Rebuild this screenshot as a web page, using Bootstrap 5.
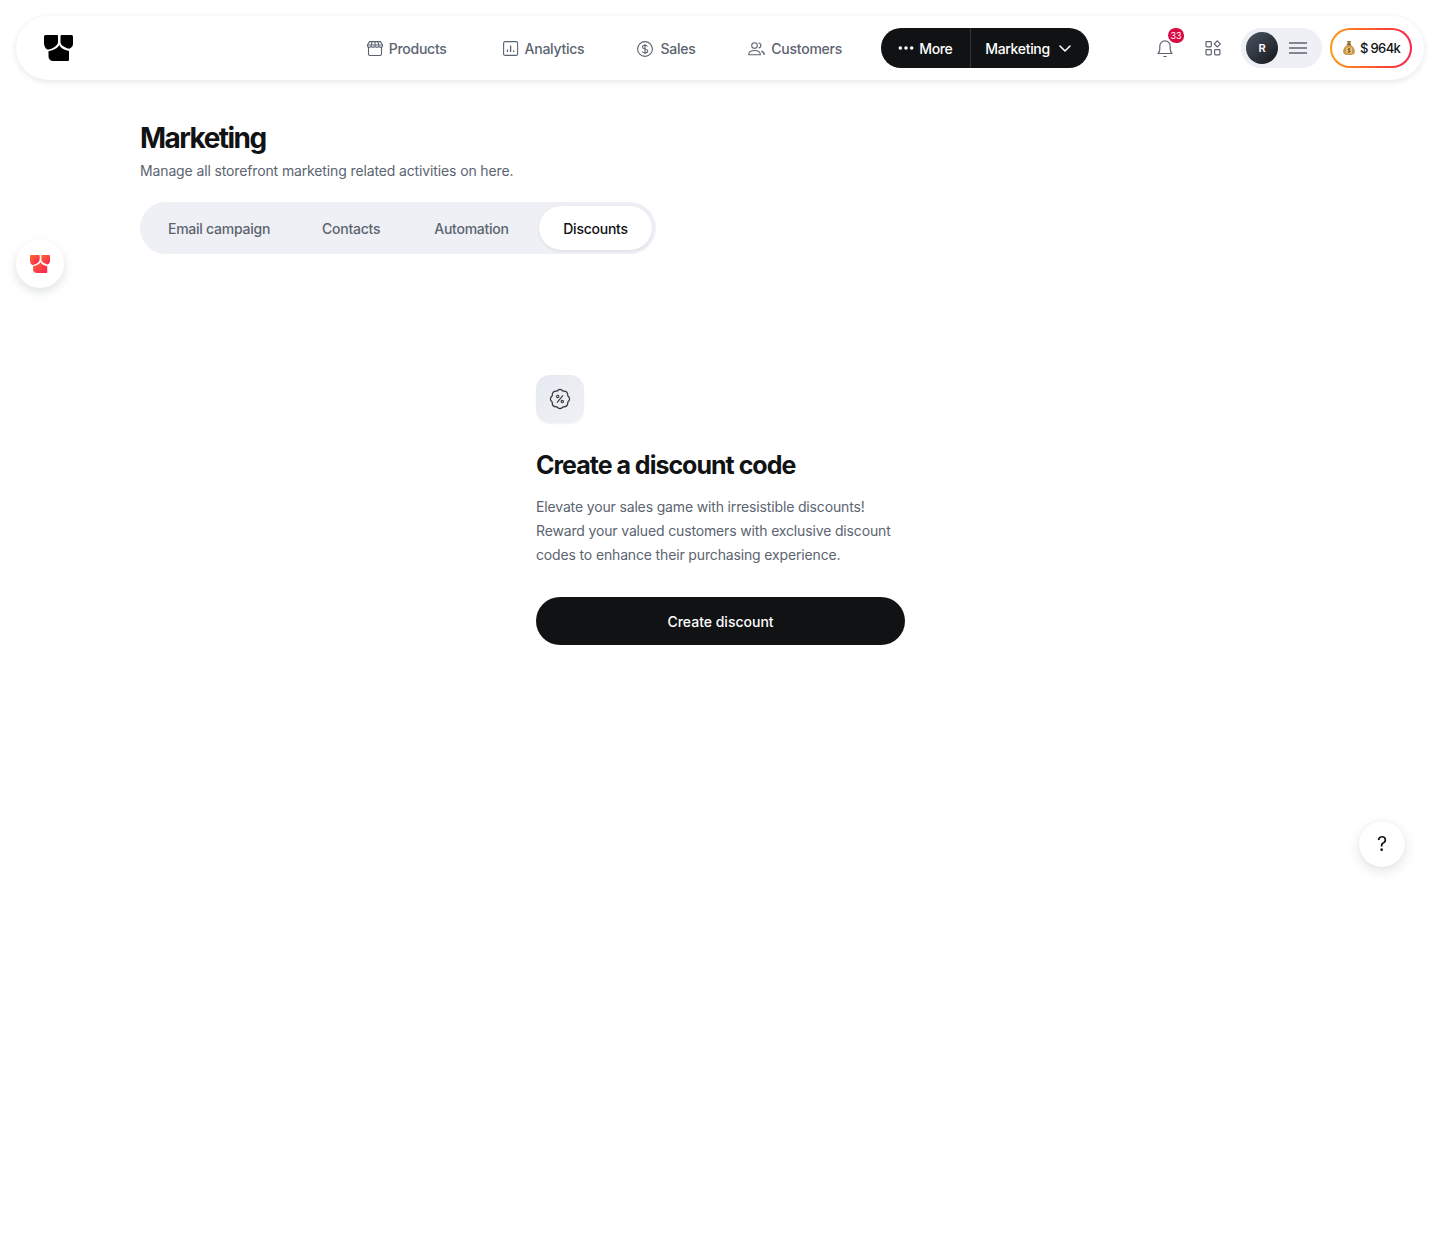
<!DOCTYPE html>
<html lang="en">
<head>
  <meta charset="UTF-8" />
  <meta name="viewport" content="width=device-width, initial-scale=1.0"/>
  <title>Marketing</title>
  <link href="https://cdn.jsdelivr.net/npm/bootstrap@5.3.0/dist/css/bootstrap.min.css" rel="stylesheet">
  <style>
    body { font-family: Inter, "Liberation Sans", sans-serif; color: #111214; background: #fff; min-height: 1244px; letter-spacing: -0.02em; }
    svg { display: block; flex: none; }
    .top-shell { padding: 16px 16px 0; }
    .top-bar { height: 64px; border-radius: 32px; background: #fff; box-shadow: 0 2px 6px rgba(30,40,60,.10), 0 0 2px rgba(30,40,60,.04); padding: 0 12px 0 28px; }
    .brand-gap { width: 294px; }
    .menu-link { color: #5b6470; font-size: 14px; font-weight: 500; text-decoration: none; gap: 6px; margin-top: 1px; letter-spacing: -0.018em; }
    .menu-link.m-products { width: 136px; }
    .menu-link.m-analytics { width: 135px; }
    .menu-link.m-sales { width: 111px; }
    .menu-link.m-sales svg { margin-right: 1px; }
    .menu-link.m-customers { width: 133px; }
    .dark-switch { height: 40px; width: 208px; border-radius: 20px; background: #111214; color: #fff; font-size: 14px; font-weight: 500; }
    .dark-switch > div { height: 40px; }
    .sw-more { width: 90px; padding-left: 17px; gap: 5px; border-right: 1px solid #33353a; }
    .sw-market { padding-left: 14px; gap: 9px; }
    .tool-area { margin-left: 68px; }
    .bell-wrap { width: 16px; height: 20px; margin-right: 32px; position: relative; }
    .bell-badge { position: absolute; left: 11px; top: -10px; width: 16px; height: 15px; border-radius: 50% 50% 45% 55%; background: #d90b43; color: #fff; font-size: 9px; line-height: 15px; text-align: center; letter-spacing: 0; }
    .user-pill { width: 81px; height: 40px; border-radius: 20px; background: #eef0f5; margin-left: 20px; padding-left: 5px; gap: 11px; }
    .user-face { width: 32px; height: 32px; border-radius: 50%; background: linear-gradient(135deg, #4b5563, #15171a); color: #fff; font-size: 11px; font-weight: 600; letter-spacing: 0; }
    .money-pill { width: 82px; height: 40px; margin-left: 8px; border-radius: 20px; border: 2px solid transparent; background: linear-gradient(#fff, #fff) padding-box, linear-gradient(90deg, #fb9b0e, #fb1f4d) border-box; font-size: 13px; font-weight: 500; gap: 5px; padding-left: 11px; color: #111214; letter-spacing: -0.05em; }
    .money-pill span { margin-top: 1px; }
    .page-body { padding: 42px 0 0 140px; }
    .page-title { font-size: 28px; line-height: 32px; font-weight: 700; letter-spacing: -0.055em; margin: 0 0 7px; color: #111214; }
    .page-sub { font-size: 14px; line-height: 20px; color: #5b6470; margin: 0 0 21px; letter-spacing: -0.13px; }
    .tab-strip { width: 516px; height: 52px; border-radius: 26px; background: #eef0f5; padding: 4px; }
    .tab-item { font-size: 14px; font-weight: 500; color: #5b6470; height: 44px; border-radius: 22px; text-decoration: none; letter-spacing: -0.018em; }
    .tab-item.t1 { margin-left: 24px; }
    .tab-item.t2 { margin-left: 52px; }
    .tab-item.t3 { margin-left: 54px; }
    .tab-item.t4 { margin-left: auto; width: 113px; background: #fff; color: #111214; box-shadow: 0 1px 3px rgba(30,40,60,.10); }
    .empty-box { width: 369px; margin: 121px 0 0 396px; }
    .empty-icon { width: 48px; height: 48px; border-radius: 14px; background: linear-gradient(135deg, #e6e9f0, #f0f1f6); box-shadow: 0 1px 2px rgba(30,40,60,.06); }
    .empty-title { font-size: 25px; line-height: 32px; font-weight: 700; letter-spacing: -0.04em; margin: 26px 0 14px; color: #111214; }
    .empty-text { font-size: 14px; line-height: 24px; color: #5b6470; margin: 0 0 30px; letter-spacing: -0.15px; }
    .create-btn { height: 48px; border-radius: 24px; background: #111214; color: #fff; border: 0; font-size: 14px; font-weight: 500; }
    .create-btn:hover { background: #111214; color: #fff; }
    .float-logo { position: fixed; left: 16px; top: 240px; width: 48px; height: 48px; border-radius: 50%; background: #fff; box-shadow: 0 4px 10px rgba(30,40,60,.14); }
    .float-help { position: fixed; left: 1359px; top: 821px; width: 46px; height: 46px; border-radius: 50%; background: #fff; box-shadow: 0 4px 12px rgba(30,40,60,.13), 0 0 2px rgba(30,40,60,.08); font-size: 20px; color: #111214; letter-spacing: 0; }
  </style>
</head>
<body>

  <div class="top-shell">
    <nav class="top-bar d-flex align-items-center">
      <svg class="brand-mark" width="29" height="26" viewBox="0 0 29 26" fill="#000">
        <path d="M1.500 0H13a1 1 0 0 1 1 1v6c0 3-3.500 6-9.500 7.600C2 14.500 0 11.500 0 8V1.500A1.500 1.500 0 0 1 1.500 0z"/>
        <path d="M17.500 0h10A1.500 1.500 0 0 1 29 1.500V9c0 2-1.500 4-4 4.800C20 12.500 16.500 10 16.500 7V1a1 1 0 0 1 1-1z"/>
        <path d="M15.300 10c1.200 3 4.500 5 9.700 6v9a1 1 0 0 1-1 1H9c-2.500 0-4.500-2-4.500-4.500v-5.200C10 15 14 13 15.300 10z"/>
      </svg>
      <div class="brand-gap"></div>
      <a href="#" class="menu-link m-products d-flex align-items-center">
        <svg width="16" height="15" viewBox="0 0 16 15" fill="none" stroke="#5b6470" stroke-width="1.100"><path d="M1.500 6v7a1.500 1.500 0 0 0 1.500 1.500h10a1.500 1.500 0 0 0 1.500-1.500V6"/><path d="M2.500.6h11l2 3.400v.5a1.800 1.800 0 0 1-3.700 0 1.900 1.900 0 0 1-3.800 0 1.900 1.900 0 0 1-3.800 0 1.800 1.800 0 0 1-3.700 0V4z"/><path d="M.6 4h14.800M5 .8 4.200 4.500M8 .8v3.700M11 .8l.8 3.700"/></svg>
        Products
      </a>
      <a href="#" class="menu-link m-analytics d-flex align-items-center">
        <svg width="16" height="15" viewBox="0 0 16 15" fill="none" stroke="#5b6470" stroke-width="1.100"><rect x=".6" y=".6" width="14" height="13.800" rx="1.500"/><path d="M4.500 11V8.500M7.600 11V4.500M10.700 11V9.500" stroke-width="1.300"/></svg>
        Analytics
      </a>
      <a href="#" class="menu-link m-sales d-flex align-items-center">
        <svg width="16" height="16" viewBox="0 0 16 16" fill="none" stroke="#5b6470" stroke-width="1.100"><circle cx="8" cy="8" r="7.400"/><path d="M10.500 5.600C10 4.600 9 4.200 8 4.200c-1.400 0-2.500.7-2.500 1.900 0 2.700 5.200 1.200 5.200 3.900 0 1.200-1.200 1.900-2.700 1.900-1.200 0-2.200-.5-2.700-1.500M8 3v10"/></svg>
        Sales
      </a>
      <a href="#" class="menu-link m-customers d-flex align-items-center">
        <svg width="17" height="14" viewBox="0 0 17 14" fill="none" stroke="#5b6470" stroke-width="1.100"><circle cx="6.500" cy="3.500" r="2.800"/><path d="M10.500 1c1.500.2 2.400 1.300 2.400 2.500s-.9 2.300-2.400 2.500"/><path d="M.7 12.800c0-2.800 2.500-4.300 5.800-4.300s5.800 1.500 5.800 4.300z"/><path d="M13.500 9.300c1.700.4 2.800 1.700 2.800 3.500" stroke-width="1.500"/></svg>
        Customers
      </a>
      <div class="dark-switch d-flex">
        <div class="sw-more d-flex align-items-center">
          <svg width="16" height="4" viewBox="0 0 16 4" fill="#fff"><circle cx="2.300" cy="2" r="1.800"/><circle cx="8" cy="2" r="1.800"/><circle cx="13.700" cy="2" r="1.800"/></svg>
          <span>More</span>
        </div>
        <div class="sw-market d-flex align-items-center">
          <span>Marketing</span>
          <svg width="12" height="7" viewBox="0 0 12 7" fill="none" stroke="#fff" stroke-width="1.500" stroke-linecap="round" stroke-linejoin="round"><path d="m1 1 5 5 5-5"/></svg>
        </div>
      </div>
      <div class="tool-area d-flex align-items-center">
        <div class="bell-wrap">
          <svg width="16" height="20" viewBox="0 0 16 20" fill="none" stroke="#5b6470" stroke-width="1.200" stroke-linejoin="round" stroke-linecap="round"><path d="M1 15.500c1.300-1.200 1.800-2.300 1.800-4.500V8a5.200 5.200 0 0 1 10.400 0v3c0 2.200.5 3.300 1.800 4.500z"/><path d="M6.800 18.500h2.400"/></svg>
          <span class="bell-badge">33</span>
        </div>
        <svg width="16" height="16" viewBox="0 0 16 16" fill="none" stroke="#5b6470" stroke-width="1.200"><rect x="1" y="1.600" width="5.300" height="5.300" rx=".8"/><rect x="1" y="9.600" width="5.300" height="5.300" rx=".8"/><rect x="9.600" y="9.600" width="5.300" height="5.300" rx=".8"/><path d="m12.300.9 3 3-3 3-3-3z"/></svg>
        <div class="user-pill d-flex align-items-center">
          <div class="user-face d-flex align-items-center justify-content-center">R</div>
          <svg width="18" height="12" viewBox="0 0 18 12" fill="none" stroke="#5b6470" stroke-width="1.300"><path d="M0 1h18M0 6h18M0 11h18"/></svg>
        </div>
        <div class="money-pill d-flex align-items-center">
          <svg width="12" height="14" viewBox="0 0 12 14"><path d="M4 0h4L7.300 3h-2.600z" fill="#a67a3a"/><path d="M4.300 3.400h3.400c2 1.600 4.300 4.200 4.300 7 0 2.500-2 3.600-6 3.600s-6-1.100-6-3.600c0-2.800 2.300-5.400 4.300-7z" fill="#c99a4e"/><rect x="4.200" y="2.800" width="3.600" height="1" fill="#5a3f19"/><rect x="3" y="6.500" width="6" height="6" rx="1" fill="#e9c878"/><path d="M7.500 8c-.8-.6-2.500-.5-2.500.5s2.400.7 2.400 1.800-1.800 1.200-2.700.5M6 7v5" fill="none" stroke="#5a3f19" stroke-width=".7"/></svg>
          <span>$ 964k</span>
        </div>
      </div>
    </nav>
  </div>

  <main class="page-body">
    <h1 class="page-title">Marketing</h1>
    <p class="page-sub">Manage all storefront marketing related activities on here.</p>
    <div class="tab-strip d-flex align-items-center">
      <a href="#" class="tab-item t1 d-flex align-items-center">Email campaign</a>
      <a href="#" class="tab-item t2 d-flex align-items-center">Contacts</a>
      <a href="#" class="tab-item t3 d-flex align-items-center">Automation</a>
      <a href="#" class="tab-item t4 d-flex align-items-center justify-content-center">Discounts</a>
    </div>

    <section class="empty-box">
      <div class="empty-icon d-flex align-items-center justify-content-center">
        <svg width="20" height="20" viewBox="0 0 20 20" fill="none" stroke="#33373d" stroke-width="1.100" stroke-linejoin="round" overflow="visible">
          <path d="M17 7.100Q20.300 10 17 12.900 17.300 17.300 12.900 17 10 20.300 7.100 17 2.700 17.300 3 12.900-.3 10 3 7.100 2.700 2.700 7.100 3 10-.3 12.900 3 17.300 2.700 17 7.100z" transform="translate(-1.100 -1.100) scale(1.110)"/>
          <circle cx="7.700" cy="7.400" r="1.200"/><circle cx="12.300" cy="12.600" r="1.200"/><path d="m7 13.700 6-7.400"/>
        </svg>
      </div>
      <h2 class="empty-title">Create a discount code</h2>
      <p class="empty-text">Elevate your sales game with irresistible discounts!<br>Reward your valued customers with exclusive discount<br>codes to enhance their purchasing experience.</p>
      <button type="button" class="btn create-btn w-100">Create discount</button>
    </section>
  </main>

  <div class="float-logo d-flex align-items-center justify-content-center">
    <svg width="20" height="18" viewBox="0 0 29 26">
      <defs><linearGradient id="logoGrad" x1="0" y1="0" x2="1" y2="1"><stop offset="0" stop-color="#fb6a2a"/><stop offset="1" stop-color="#fb1f5c"/></linearGradient></defs>
      <g fill="url(#logoGrad)">
        <path d="M1.500 0H13a1 1 0 0 1 1 1v6c0 3-3.500 6-9.500 7.600C2 14.500 0 11.500 0 8V1.500A1.500 1.500 0 0 1 1.500 0z"/>
        <path d="M17.500 0h10A1.500 1.500 0 0 1 29 1.500V9c0 2-1.500 4-4 4.800C20 12.500 16.500 10 16.500 7V1a1 1 0 0 1 1-1z"/>
        <path d="M15.300 10c1.200 3 4.500 5 9.700 6v9a1 1 0 0 1-1 1H9c-2.500 0-4.500-2-4.500-4.500v-5.200C10 15 14 13 15.300 10z"/>
      </g>
    </svg>
  </div>
  <div class="float-help d-flex align-items-center justify-content-center">?</div>

  <script src="https://cdn.jsdelivr.net/npm/bootstrap@5.3.0/dist/js/bootstrap.bundle.min.js"></script>
</body>
</html>
